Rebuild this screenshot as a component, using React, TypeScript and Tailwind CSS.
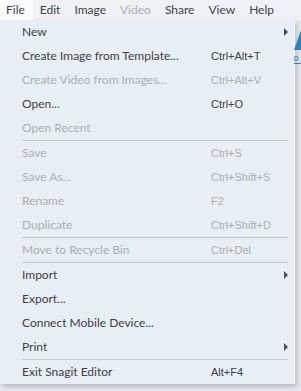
import React from "react";

type Item =
  | { sep: true }
  | { sep?: false; label: string; shortcut?: string; disabled?: boolean; sub?: boolean };

const items: Item[] = [
  { label: "New", sub: true },
  { label: "Create Image from Template...", shortcut: "Ctrl+Alt+T" },
  { label: "Create Video from Images...", shortcut: "Ctrl+Alt+V", disabled: true },
  { label: "Open...", shortcut: "Ctrl+O" },
  { label: "Open Recent", disabled: true },
  { sep: true },
  { label: "Save", shortcut: "Ctrl+S", disabled: true },
  { label: "Save As...", shortcut: "Ctrl+Shift+S", disabled: true },
  { label: "Rename", shortcut: "F2", disabled: true },
  { label: "Duplicate", shortcut: "Ctrl+Shift+D", disabled: true },
  { sep: true },
  { label: "Move to Recycle Bin", shortcut: "Ctrl+Del", disabled: true },
  { sep: true },
  { label: "Import", sub: true },
  { label: "Export..." },
  { label: "Connect Mobile Device..." },
  { label: "Print", sub: true },
  { sep: true },
  { label: "Exit Snagit Editor", shortcut: "Alt+F4" },
];

const menus = ["File", "Edit", "Image", "Video", "Share", "View", "Help"];

function Arrow() {
  return (
    <svg width="4" height="8" viewBox="0 0 4 8" className="block">
      <path d="M0 0 L4 4 L0 8 Z" fill="#4a5058" />
    </svg>
  );
}

export default function App() {
  return (
    <div
      className="relative w-[301px] h-[391px] overflow-hidden bg-[#e4eaf1] text-[#3b4148]"
      style={{ fontFamily: "Lato, 'Liberation Sans', sans-serif" }}
    >
      {/* background app content peeking at right */}
      <svg className="absolute right-0 top-[28px]" width="7" height="40" viewBox="0 0 7 40">
        <path d="M7 2 L0 22 L7 22 Z" fill="#2f7fc4" />
        <text x="-1" y="33" fontSize="10" fill="#2f7fc4" fontFamily="Lato, sans-serif">o</text>
        <rect x="0" y="35" width="7" height="1" fill="#2f7fc4" />
      </svg>

      {/* menu bar */}
      <div className="flex h-[20px] items-center bg-[#eef2f7] text-[12px]">
        {menus.map((m, i) => (
          <div
            key={m}
            className={
              "flex h-full items-center " +
              (i === 0 ? "bg-[#fbfcfd] pl-[6px] pr-[8px] " : "px-[7px] ") +
              (m === "Video" ? "text-[#a9aeb4]" : "text-[#3b4148]")
            }
          >
            {m}
          </div>
        ))}
      </div>

      {/* dropdown panel */}
      <div className="w-[295px] border-r border-[#f7f9fb] bg-[#e8eef5] shadow-[2px_3px_5px_rgba(0,0,0,0.2)]">
        {items.map((it, i) =>
          it.sep ? (
            <div key={i} className="ml-[22px] mr-[6px] h-px bg-[#c3c9d0]" />
          ) : (
            <div
              key={i}
              className={
                "grid h-[24px] grid-cols-[189px_1fr_auto] items-center pl-[22px] pr-[6px] " +
                (it.disabled ? "text-[#a9aeb4]" : "text-[#3b4148]")
              }
            >
              <span className="whitespace-nowrap text-[12px]">{it.label}</span>
              <span
                className="whitespace-nowrap text-[11px]"
                style={{ fontFamily: "'Liberation Sans', Arial, sans-serif" }}
              >
                {it.shortcut ?? ""}
              </span>
              <span className="flex w-[4px] justify-end">{it.sub ? <Arrow /> : null}</span>
            </div>
          )
        )}
      </div>
    </div>
  );
}
